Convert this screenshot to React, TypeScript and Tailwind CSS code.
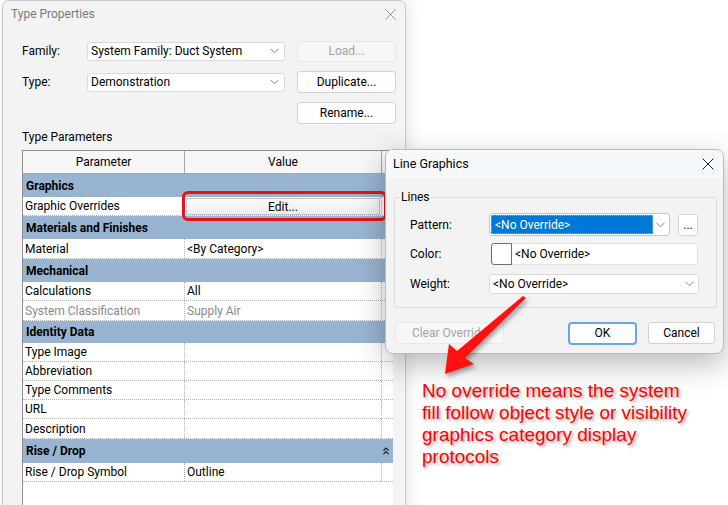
import React from 'react';

type Row =
  | { kind: 'group'; label: string; h: number; collapse?: boolean }
  | { kind: 'param'; label: string; h: number; value?: string; muted?: boolean; edit?: boolean };

const rows: Row[] = [
  { kind: 'group', label: 'Graphics', h: 23 },
  { kind: 'param', label: 'Graphic Overrides', h: 19, edit: true },
  { kind: 'group', label: 'Materials and Finishes', h: 23 },
  { kind: 'param', label: 'Material', h: 20, value: '<By Category>' },
  { kind: 'group', label: 'Mechanical', h: 23 },
  { kind: 'param', label: 'Calculations', h: 19, value: 'All' },
  { kind: 'param', label: 'System Classification', h: 20, value: 'Supply Air', muted: true },
  { kind: 'group', label: 'Identity Data', h: 22 },
  { kind: 'param', label: 'Type Image', h: 19 },
  { kind: 'param', label: 'Abbreviation', h: 19 },
  { kind: 'param', label: 'Type Comments', h: 19 },
  { kind: 'param', label: 'URL', h: 19 },
  { kind: 'param', label: 'Description', h: 20 },
  { kind: 'group', label: 'Rise / Drop', h: 24, collapse: true },
  { kind: 'param', label: 'Rise / Drop Symbol', h: 19, value: 'Outline' },
];

function Chevron() {
  return (
    <svg width="9" height="6" viewBox="0 0 9 6">
      <path d="M0.5 0.8 L4.5 4.8 L8.5 0.8" fill="none" stroke="#808080" strokeWidth="1" />
    </svg>
  );
}

function CloseX({ color, size }: { color: string; size: number }) {
  return (
    <svg width={size} height={size} viewBox="0 0 12 12">
      <path d="M0.5 0.5 L11.5 11.5 M11.5 0.5 L0.5 11.5" stroke={color} strokeWidth="1" />
    </svg>
  );
}

function DoubleUp() {
  return (
    <svg width="6" height="8" viewBox="0 0 6 8">
      <path d="M0.5 3.5 L3 1 L5.5 3.5 M0.5 7 L3 4.5 L5.5 7" fill="none" stroke="#222" strokeWidth="1.2" />
    </svg>
  );
}

function TypeProperties() {
  return (
    <div className="absolute left-[2px] top-0 w-[404px] h-[530px] flex flex-col bg-[#f3f3f3] border border-[#c8c8c8] rounded-t-[7px] shadow-[3px_0_14px_rgba(0,0,0,0.10)]">
      <div className="h-[26px] flex items-center justify-between pl-[8px] pr-[9px] text-[#7a7a7a]">
        <span>Type Properties</span>
        <CloseX color="#8c8c8c" size={11} />
      </div>

      <div className="flex-1 flex flex-col pl-[19px] pt-[13px]">
        <div className="flex items-center h-[22px]">
          <span className="w-[65px]">Family:</span>
          <div className="w-[198px] h-[19px] flex items-center justify-between pl-[3px] pr-[5px] bg-white border border-[#dadada] rounded-[3px]">
            <span>System Family: Duct System</span>
            <Chevron />
          </div>
          <div className="ml-[12px] w-[99px] h-[21px] flex items-center justify-center bg-[#f6f6f6] border border-[#e6e6e6] rounded-[3px] text-[#a3a3a3]">
            Load...
          </div>
        </div>

        <div className="flex items-center h-[22px] mt-[9px]">
          <span className="w-[65px]">Type:</span>
          <div className="w-[198px] h-[19px] flex items-center justify-between pl-[3px] pr-[5px] bg-white border border-[#dadada] rounded-[3px]">
            <span>Demonstration</span>
            <Chevron />
          </div>
          <div className="ml-[12px] w-[99px] h-[22px] flex items-center justify-center bg-[#fdfdfd] border border-[#d2d2d2] rounded-[3px]">
            Duplicate...
          </div>
        </div>

        <div className="flex items-center h-[22px] mt-[9px]">
          <div className="ml-[275px] w-[99px] h-[22px] flex items-center justify-center bg-[#fdfdfd] border border-[#d2d2d2] rounded-[3px]">
            Rename...
          </div>
        </div>

        <div className="mt-[6px] leading-[14px]">Type Parameters</div>

        <div className="mt-[6px] w-[371px] flex-1 bg-white border-l border-t border-[#8f8f8f]">
          <div className="flex h-[23px] bg-[#f7f7f7] border-b border-[#a8a8a8]">
            <div className="w-[162px] flex items-center justify-center border-r border-[#a8a8a8]">Parameter</div>
            <div className="w-[197px] flex items-center justify-center border-r border-[#a8a8a8]">Value</div>
            <div className="flex-1" />
          </div>

          {rows.map((r) =>
            r.kind === 'group' ? (
              <div
                key={r.label}
                style={{ height: r.h }}
                className="flex items-center justify-between pl-[3px] pr-[4px] bg-[#99b4d1] font-bold"
              >
                <span>{r.label}</span>
                {r.collapse && <DoubleUp />}
              </div>
            ) : (
              <div
                key={r.label}
                style={{ height: r.h }}
                className={`flex border-b border-dotted border-[#b4b4b4] ${r.muted ? 'text-[#8a8a8a]' : ''}`}
              >
                <div className="w-[162px] flex items-center pl-[2px] border-r border-dotted border-[#b4b4b4] whitespace-nowrap">{r.label}</div>
                <div className="relative w-[197px] flex items-center pl-[2px] border-r border-dotted border-[#b4b4b4]">
                  {r.edit ? (
                    <>
                      <div className="absolute left-[1px] top-[1px] right-[1px] bottom-0 flex items-center justify-center bg-gradient-to-b from-[#fbfbfb] to-[#ececec] border border-[#c4c4c4]">
                        Edit...
                      </div>
                      <div className="absolute left-[-3px] top-[-6px] w-[205px] h-[30px] border-[3px] border-[#e8101a] rounded-[6px]" />
                    </>
                  ) : (
                    r.value
                  )}
                </div>
                <div className="flex-1" />
              </div>
            ),
          )}
        </div>
      </div>
    </div>
  );
}

function LineGraphics() {
  return (
    <div className="absolute left-[385px] top-[149px] w-[339px] h-[205px] flex flex-col bg-[#f3f3f3] border border-[#bababa] rounded-[8px] overflow-hidden shadow-[0_10px_30px_rgba(0,0,0,0.28)]">
      <div className="h-[28px] flex items-center justify-between pl-[7px] pr-[9px] bg-[#f6f9fc]">
        <span className="text-[12.5px]">Line Graphics</span>
        <CloseX color="#222" size={12} />
      </div>

      <fieldset className="ml-[8px] mt-[11px] w-[323px] border border-[#dcdcdc] rounded-[3px]">
        <legend className="ml-[5px] px-[1px] leading-[16px]">Lines</legend>
        <div className="pl-[15px] pt-[8px] pb-[13px]">
          <div className="flex items-center h-[23px]">
            <span className="w-[79px]">Pattern:</span>
            <div className="w-[181px] h-[23px] flex items-center bg-white border border-[#c6c6c6] rounded-[3px] p-[1px]">
              <div className="w-[162px] h-full flex items-center pl-[3px] bg-[#0078d7] border border-dotted border-[#c9a46a] text-white">
                {'<No Override>'}
              </div>
              <div className="flex-1 flex justify-center">
                <Chevron />
              </div>
            </div>
            <div className="ml-[8px] w-[20px] h-[22px] flex items-center justify-center bg-white border border-[#d6d6d6] rounded-[3px] leading-none">
              ...
            </div>
          </div>

          <div className="flex items-center h-[22px] mt-[7px]">
            <span className="w-[81px]">Color:</span>
            <div className="w-[207px] h-[22px] flex items-center bg-white border border-[#e2e2e2] rounded-[3px]">
              <div className="w-[21px] h-[22px] -ml-px bg-white border border-[#6e6e6e] rounded-l-[3px]" />
              <span className="ml-[3px]">{'<No Override>'}</span>
            </div>
          </div>

          <div className="flex items-center h-[21px] mt-[8px]">
            <span className="w-[79px]">Weight:</span>
            <div className="w-[210px] h-[20px] flex items-center justify-between pl-[3px] pr-[4px] bg-white border border-[#dadada] rounded-[3px]">
              <span>{'<No Override>'}</span>
              <Chevron />
            </div>
          </div>
        </div>
      </fieldset>

      <div className="flex items-center h-[22px] mt-[14px]">
        <div className="ml-[9px] w-[109px] h-[22px] flex items-center justify-center bg-[#f7f7f7] border border-[#e9e9e9] rounded-[3px] text-[#a6a6a6]">
          Clear Override
        </div>
        <div className="ml-[64px] w-[69px] h-[23px] flex items-center justify-center bg-[#fdfdfd] border-2 border-[#6aa6e6] rounded-[4px]">
          OK
        </div>
        <div className="ml-[11px] w-[67px] h-[22px] flex items-center justify-center bg-[#fdfdfd] border border-[#d2d2d2] rounded-[3px]">
          Cancel
        </div>
      </div>
    </div>
  );
}

export default function App() {
  return (
    <div className="relative w-[728px] h-[505px] overflow-hidden bg-white font-['Roboto',sans-serif] text-[12px] text-black">
      <TypeProperties />
      <LineGraphics />

      {/* callout arrow */}
      <svg
        width="728"
        height="505"
        viewBox="0 0 728 505"
        className="absolute left-0 top-0 pointer-events-none drop-shadow-[2px_3px_2px_rgba(0,0,0,0.35)]"
      >
        <polygon points="523,296 526,298 465,358 474,364 445,374 449,344 457,351" fill="#ff1010" />
      </svg>

      <p className="absolute left-[422px] top-[380px] font-['Liberation_Sans',Arial,sans-serif] text-[19px] leading-[22px] text-[#ff0000] [text-shadow:2px_2px_3px_rgba(0,0,0,0.35)]">
        No override means the system
        <br />
        fill follow object style or visibility
        <br />
        graphics category display
        <br />
        protocols
      </p>
    </div>
  );
}
